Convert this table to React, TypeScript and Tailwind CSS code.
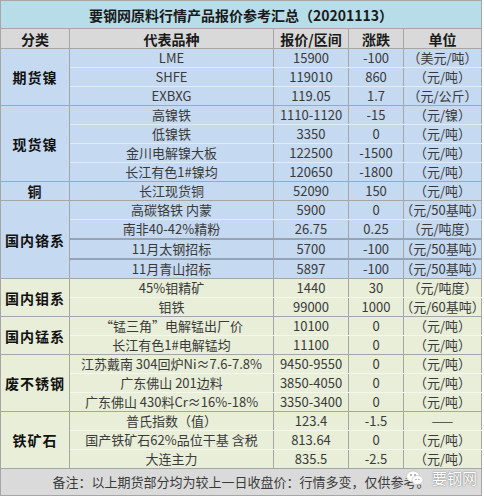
import React from "react";

type Row = { item: string; price: string; change: string; unit: string; thick?: boolean };
type Group = { name: string; tone: "blue" | "green"; rows: Row[] };

const groups: Group[] = [
  {
    name: "期货镍",
    tone: "blue",
    rows: [
      { item: "LME", price: "15900", change: "-100", unit: "（美元/吨）" },
      { item: "SHFE", price: "119010", change: "860", unit: "（元/吨）" },
      { item: "EXBXG", price: "119.05", change: "1.7", unit: "（元/公斤）" },
    ],
  },
  {
    name: "现货镍",
    tone: "blue",
    rows: [
      { item: "高镍铁", price: "1110-1120", change: "-15", unit: "（元/镍）" },
      { item: "低镍铁", price: "3350", change: "0", unit: "（元/吨）" },
      { item: "金川电解镍大板", price: "122500", change: "-1500", unit: "（元/吨）" },
      { item: "长江有色1#镍均", price: "120650", change: "-1800", unit: "（元/吨）" },
    ],
  },
  {
    name: "铜",
    tone: "blue",
    rows: [{ item: "长江现货铜", price: "52090", change: "150", unit: "（元/吨）" }],
  },
  {
    name: "国内铬系",
    tone: "blue",
    rows: [
      { item: "高碳铬铁 内蒙", price: "5900", change: "0", unit: "（元/50基吨）" },
      { item: "南非40-42%精粉", price: "26.75", change: "0.25", unit: "（元/吨度）", thick: true },
      { item: "11月太钢招标", price: "5700", change: "-100", unit: "（元/50基吨）", thick: true },
      { item: "11月青山招标", price: "5897", change: "-100", unit: "（元/50基吨）" },
    ],
  },
  {
    name: "国内钼系",
    tone: "green",
    rows: [
      { item: "45%钼精矿", price: "1440", change: "30", unit: "（元/吨度）" },
      { item: "钼铁", price: "99000", change: "1000", unit: "（元/60基吨）" },
    ],
  },
  {
    name: "国内锰系",
    tone: "green",
    rows: [
      { item: "“锰三角”电解锰出厂价", price: "10100", change: "0", unit: "（元/吨）" },
      { item: "长江有色1#电解锰均", price: "11100", change: "0", unit: "（元/吨）" },
    ],
  },
  {
    name: "废不锈钢",
    tone: "green",
    rows: [
      { item: "江苏戴南 304回炉Ni≈7.6-7.8%", price: "9450-9550", change: "0", unit: "（元/吨）" },
      { item: "广东佛山 201边料", price: "3850-4050", change: "0", unit: "（元/吨）" },
      { item: "广东佛山 430料Cr≈16%-18%", price: "3350-3400", change: "0", unit: "（元/吨）" },
    ],
  },
  {
    name: "铁矿石",
    tone: "green",
    rows: [
      { item: "普氏指数（值）", price: "123.4", change: "-1.5", unit: "——" },
      { item: "国产铁矿石62%品位干基 含税", price: "813.64", change: "0", unit: "（元/吨）" },
      { item: "大连主力", price: "835.5", change: "-2.5", unit: "（元/吨）" },
    ],
  },
];

function WeChatMark() {
  return (
    <svg width="18" height="16" viewBox="0 0 18 16">
      <ellipse cx="7" cy="6.5" rx="6.5" ry="5.5" fill="#ffffff" stroke="#b8b8b8" strokeWidth="0.6" />
      <ellipse cx="11.5" cy="10" rx="5.5" ry="4.5" fill="#ffffff" stroke="#b8b8b8" strokeWidth="0.6" />
      <circle cx="5" cy="5" r="0.9" fill="#9a9a9a" />
      <circle cx="9" cy="5" r="0.9" fill="#9a9a9a" />
      <circle cx="10" cy="9.5" r="0.7" fill="#9a9a9a" />
      <circle cx="13" cy="9.5" r="0.7" fill="#9a9a9a" />
    </svg>
  );
}

export default function App() {
  return (
    <div className="relative h-[497px] w-[484px] bg-white font-['Noto_Sans_CJK_SC',sans-serif]">
      <table className="w-[481px] table-fixed border-collapse border border-[#a6a6a6] text-[13px] leading-[18px] text-[#3a3a3a]">
        <colgroup>
          <col className="w-[69px]" />
          <col className="w-[204px]" />
          <col className="w-[75px]" />
          <col className="w-[55px]" />
          <col className="w-[78px]" />
        </colgroup>
        <tbody>
          <tr className="h-[28px] bg-[#b7dde8]">
            <td colSpan={5} className="border-b border-[#a6a6a6] p-0 text-center text-[14px] font-bold text-[#1a1a1a]">
              要钢网原料行情产品报价参考汇总（20201113）
            </td>
          </tr>
          <tr className="h-[20px] bg-[#d9d9d9] text-[14px] font-bold text-[#1a1a1a]">
            <td className="border-b border-r border-[#a6a6a6] p-0 text-center">分类</td>
            <td className="border-b border-r border-[#a6a6a6] p-0 text-center">代表品种</td>
            <td className="border-b border-r border-[#a6a6a6] p-0 text-center">报价/区间</td>
            <td className="border-b border-r border-[#a6a6a6] p-0 text-center">涨跌</td>
            <td className="border-b border-[#a6a6a6] p-0 text-center">单位</td>
          </tr>
          {groups.map((g) =>
            g.rows.map((r, i) => {
              const last = i === g.rows.length - 1;
              const bg = g.tone === "blue" ? "bg-[#c5d9f1]" : "bg-[#e8eed8]";
              const line = last
                ? "border-b border-b-[#a6a6a6]"
                : r.thick
                ? "border-b-2 border-b-[#97a3b3]"
                : g.tone === "blue"
                ? "border-b border-b-[#e3ebf6]"
                : "border-b border-b-[#f4f7ec]";
              return (
                <tr key={g.name + i} className={`h-[19px] ${bg}`}>
                  {i === 0 && (
                    <td
                      rowSpan={g.rows.length}
                      className="border-b border-r border-[#a6a6a6] p-0 text-center text-[14px] font-bold tracking-[1px] text-[#111]"
                    >
                      {g.name}
                    </td>
                  )}
                  <td className={`whitespace-nowrap border-r border-r-[#a6a6a6] p-0 text-center ${line}`}>{r.item}</td>
                  <td className={`border-r border-r-[#a6a6a6] p-0 text-center ${line}`}>{r.price}</td>
                  <td className={`border-r border-r-[#a6a6a6] p-0 text-center ${line}`}>{r.change}</td>
                  <td className={`whitespace-nowrap p-0 text-center [font-feature-settings:'halt'] ${line}`}>{r.unit}</td>
                </tr>
              );
            })
          )}
          <tr className="h-[27px] bg-[#dadada]">
            <td colSpan={5} className="p-0 text-center text-[#3a3a3a]">
              备注：以上期货部分均为较上一日收盘价：行情多变，仅供参考。
            </td>
          </tr>
        </tbody>
      </table>
      <div className="absolute left-[406px] top-[467px] flex items-center gap-[8px]">
        <WeChatMark />
        <span className="text-[15px] text-white [text-shadow:0_0_1px_#777,0_0_2px_#999]">要钢网</span>
      </div>
    </div>
  );
}
